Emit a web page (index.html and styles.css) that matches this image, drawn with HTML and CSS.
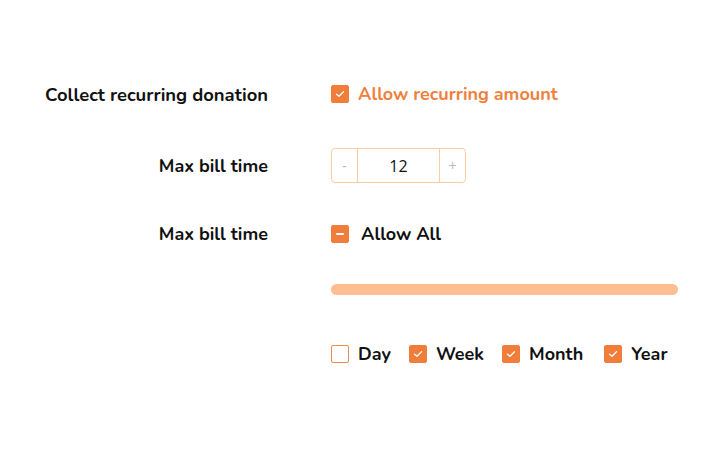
FILE: index.html
```html
<!DOCTYPE html>
<html>
<head>
<meta charset="utf-8">
<link rel="stylesheet" href="styles.css">
</head>
<body>
<div class="form">
  <div class="row r1">
    <div class="label">Collect recurring donation</div>
    <div class="field">
      <label class="check">
        <span class="box on"><svg width="10" height="8" viewBox="0 0 10 8"><path d="M1.5 4.2 L4 6.3 L8.5 1.8" fill="none" stroke="#fff" stroke-width="1.3" stroke-linecap="round" stroke-linejoin="round"/></svg></span>
        <span class="ctext orange">Allow recurring amount</span>
      </label>
    </div>
  </div>
  <div class="row r2">
    <div class="label">Max bill time</div>
    <div class="field">
      <div class="stepper">
        <span class="step">-</span>
        <span class="val">12</span>
        <span class="step">+</span>
      </div>
    </div>
  </div>
  <div class="row r3">
    <div class="label">Max bill time</div>
    <div class="field">
      <label class="check">
        <span class="box on"><span class="dash"></span></span>
        <span class="ctext wide">Allow All</span>
      </label>
    </div>
  </div>
  <div class="row r4">
    <div class="label"></div>
    <div class="field"><div class="track"></div></div>
  </div>
  <div class="row r5">
    <div class="label"></div>
    <div class="field periods">
      <label class="check"><span class="box"></span><span class="ctext">Day</span></label>
      <label class="check"><span class="box on"><svg width="10" height="8" viewBox="0 0 10 8"><path d="M1.5 4.2 L4 6.3 L8.5 1.8" fill="none" stroke="#fff" stroke-width="1.3" stroke-linecap="round" stroke-linejoin="round"/></svg></span><span class="ctext">Week</span></label>
      <label class="check"><span class="box on"><svg width="10" height="8" viewBox="0 0 10 8"><path d="M1.5 4.2 L4 6.3 L8.5 1.8" fill="none" stroke="#fff" stroke-width="1.3" stroke-linecap="round" stroke-linejoin="round"/></svg></span><span class="ctext">Month</span></label>
      <label class="check"><span class="box on"><svg width="10" height="8" viewBox="0 0 10 8"><path d="M1.5 4.2 L4 6.3 L8.5 1.8" fill="none" stroke="#fff" stroke-width="1.3" stroke-linecap="round" stroke-linejoin="round"/></svg></span><span class="ctext">Year</span></label>
    </div>
  </div>
</div>
</body>
</html>
```
FILE: styles.css
```css
* { box-sizing: border-box; }
html, body { margin: 0; padding: 0; background: #fff; }
body {
  font-family: "Nunito", "Lato", "Open Sans", sans-serif;
  color: #111;
  width: 723px;
  height: 451px;
  overflow: hidden;
}
.form { padding-top: 76px; }
.row { display: flex; align-items: center; }
.label {
  width: 268px;
  flex: none;
  text-align: right;
  font-weight: 700;
  font-size: 18px;
  color: #111;
}
.r1 .label { font-size: 18.4px; }
.field { margin-left: 63px; display: flex; align-items: center; }
.r1 { height: 36px; margin-bottom: 36px; }
.r2 { height: 35px; margin-bottom: 33px; }
.r3 { height: 35px; margin-bottom: 33px; }
.r4 { height: 11px; margin-bottom: 50px; }
.r5 { height: 18px; }
.check { display: flex; align-items: center; cursor: pointer; }
.box {
  width: 18px; height: 18px;
  border: 1.5px solid #f08a4b;
  border-radius: 2px;
  background: #fff;
  display: flex; align-items: center; justify-content: center;
  flex: none;
}
.box.on { background: #f07d3a; border-color: #f07d3a; }
.dash { width: 8px; height: 2px; background: #fff; border-radius: 1px; }
.ctext { margin-left: 9px; font-weight: 700; font-size: 18px; color: #111; }
.ctext.wide { margin-left: 12px; }
.ctext.orange { color: #f0803c; margin-left: 9px; }
.stepper {
  display: flex;
  width: 135px; height: 35px;
  border: 1px solid #ffcaa6;
  border-radius: 4px;
}
.step {
  width: 26px; flex: none;
  display: flex; align-items: center; justify-content: center;
  color: #b8b8b8; font-size: 14px;
  font-family: "Open Sans", sans-serif;
}
.step:first-child { border-right: 1px solid #ffcaa6; }
.step:last-child { border-left: 1px solid #ffcaa6; }
.val {
  flex: 1;
  display: flex; align-items: center; justify-content: center;
  font-size: 16px; color: #111;
  font-family: "Open Sans", sans-serif;
}
.track {
  width: 347px; height: 11px;
  background: #ffbd92;
  border-radius: 6px;
}
.periods .check { margin-right: 18px; }
.periods .check:nth-child(3) { margin-right: 21px; }
```
